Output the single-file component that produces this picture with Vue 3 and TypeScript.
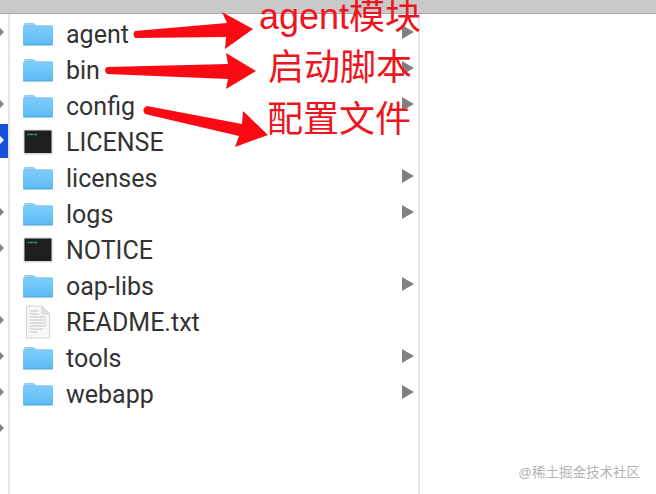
<template>
  <div class="finder">
    <div class="titlebar"></div>
    <div class="columns">
      <div class="gutter">
        <div
          v-for="(mark, i) in gutterMarks"
          :key="i"
          class="gutter-row"
          :class="{ selected: mark === 'selected' }"
        >
          <span v-if="mark" class="gutter-arrow"></span>
        </div>
      </div>

      <ul class="files">
        <li v-for="file in files" :key="file.name" class="file">
          <svg v-if="file.kind === 'folder'" class="icon" width="32" height="26" viewBox="0 0 32 26">
            <defs>
              <linearGradient id="folderBody" x1="0" y1="0" x2="0" y2="1">
                <stop offset="0" stop-color="#7ccdf9" />
                <stop offset="1" stop-color="#5dbcf6" />
              </linearGradient>
            </defs>
            <path d="M2 3.5Q2 2 3.5 2H11Q12.5 2 13.5 3.5L14 4.5H2Z" fill="#8fd3f8" />
            <rect x="1" y="4.5" width="30" height="20" rx="1.5" fill="#4f9fd6" />
            <rect x="1" y="5" width="30" height="18.6" rx="1.2" fill="url(#folderBody)" />
          </svg>
          <svg v-else-if="file.kind === 'exec'" class="icon" width="32" height="26" viewBox="0 0 32 26">
            <rect x="1.5" y="0.5" width="29" height="25" rx="1.5" fill="#d8d8d8" />
            <rect x="2.5" y="1.5" width="27" height="22.5" fill="#1d1f1e" />
            <path d="M5.5 5.5H15" stroke="#4aa35a" stroke-width="1.6" stroke-dasharray="2 0.5" />
          </svg>
          <svg v-else class="icon" width="32" height="34" viewBox="0 0 32 34">
            <path d="M4.5 1H20L27.5 9V33H4.5Z" fill="#f6f6f6" stroke="#d6d6d6" />
            <path d="M20 1V9H27.5Z" fill="#e2e2e2" stroke="#d6d6d6" />
            <path d="M8 6H17M8 9H17M8 12H24M8 15H24M8 18H24M8 21H24M8 24H21M8 27H15" stroke="#d6d6d6" stroke-width="1.6" />
          </svg>
          <span class="name">{{ file.name }}</span>
          <span v-if="file.kind === 'folder'" class="chevron"></span>
        </li>
      </ul>

      <div class="preview">
        <span class="watermark">@稀土掘金技术社区</span>
      </div>
    </div>

    <!-- red annotations drawn on top of the listing -->
    <svg class="arrows" width="656" height="494" viewBox="0 0 656 494">
      <path d="M135 31L227 23L222 12L253 29L225 49L226 37L135 38Q132 34 135 31Z" />
      <path d="M107 67L228 64L226 53L256 71L226 89L228 79L107 74Q103 70 107 67Z" />
      <path d="M147 106L242 124L243 111L268 135L235 147L239 136L145 114Q141 109 147 106Z" />
    </svg>
    <span class="note note-agent">agent模块</span>
    <span class="note note-bin">启动脚本</span>
    <span class="note note-config">配置文件</span>
  </div>
</template>

<script setup lang="ts">
type Kind = 'folder' | 'exec' | 'text'

interface FileItem {
  name: string
  kind: Kind
}

const files: FileItem[] = [
  { name: 'agent', kind: 'folder' },
  { name: 'bin', kind: 'folder' },
  { name: 'config', kind: 'folder' },
  { name: 'LICENSE', kind: 'exec' },
  { name: 'licenses', kind: 'folder' },
  { name: 'logs', kind: 'folder' },
  { name: 'NOTICE', kind: 'exec' },
  { name: 'oap-libs', kind: 'folder' },
  { name: 'README.txt', kind: 'text' },
  { name: 'tools', kind: 'folder' },
  { name: 'webapp', kind: 'folder' }
]

// small arrows of the cut-off parent column
const gutterMarks = ['arrow', '', 'arrow', 'selected', '', 'arrow', 'arrow', '', 'arrow', 'arrow', 'arrow', 'arrow', '']
</script>

<style scoped>
.finder {
  position: relative;
  width: 656px;
  height: 494px;
  overflow: hidden;
  background: #fff;
  font-family: Roboto, "Liberation Sans", sans-serif;
}

.titlebar {
  height: 13px;
  background: #c9c9c9;
  border-bottom: 1px solid #a9a9a9;
}

.columns {
  display: flex;
  height: 480px;
}

.gutter {
  flex: none;
  width: 8px;
  border-right: 2px solid #e6e6e6;
  overflow: hidden;
}

.gutter-row {
  display: flex;
  align-items: center;
  height: 36px;
}

.gutter-row.selected {
  background: linear-gradient(#fff 2px, #1450d8 2px);
}

.gutter-arrow {
  width: 0;
  height: 0;
  border-top: 4px solid transparent;
  border-bottom: 4px solid transparent;
  border-left: 4px solid #808080;
}

.selected .gutter-arrow {
  border-left-color: #fff;
}

.files {
  flex: none;
  width: 408px;
  margin: 0;
  padding: 2px 0 0;
  list-style: none;
  border-right: 2px solid #e6e6e6;
}

.file {
  display: flex;
  align-items: center;
  height: 36px;
  padding: 0 4px 0 12px;
}

.icon {
  flex: none;
}

.name {
  margin-left: 12px;
  font-size: 25px;
  color: #333;
}

.chevron {
  width: 0;
  height: 0;
  margin: -4px 0 0 auto;
  border-top: 7px solid transparent;
  border-bottom: 7px solid transparent;
  border-left: 12px solid #808080;
}

.preview {
  flex: 1;
  position: relative;
}

.watermark {
  position: absolute;
  right: 16px;
  bottom: 13px;
  font-family: "Liberation Sans", "Noto Sans CJK SC", sans-serif;
  font-size: 13.5px;
  color: #b4b4b4;
}

.arrows {
  position: absolute;
  left: 0;
  top: 0;
  fill: #fb0a14;
  pointer-events: none;
}

.note {
  position: absolute;
  font-family: "Liberation Sans", "Noto Sans CJK SC", sans-serif;
  font-size: 36px;
  line-height: 34px;
  color: #ee1420;
  white-space: nowrap;
}

.note-agent {
  left: 259px;
  top: 0;
}

.note-bin {
  left: 268px;
  top: 51px;
}

.note-config {
  left: 267px;
  top: 103px;
}
</style>
